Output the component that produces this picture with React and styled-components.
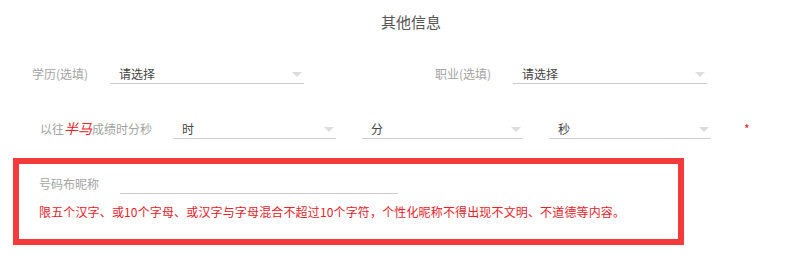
import React from 'react';
import styled, {createGlobalStyle} from "styled-components";

const GlobalStyle = createGlobalStyle`
  html, body {
    margin: 0;
    padding: 0;
    background: #fff;
  }
  body {
    font-family: "Noto Sans CJK SC", "Liberation Sans", sans-serif;
  }
`;

const Select = ({value, width}) => (
    <SelectBox $width={width}>
        <span>{value}</span>
        <Arrow/>
    </SelectBox>
);

const App = () => {
    return (
        <StyledComponent>
            <GlobalStyle/>
            <Title>其他信息</Title>

            <TopRow>
                <Field>
                    <Label>学历(选填)</Label>
                    <Select value={'请选择'} width={194}/>
                </Field>
                <Field>
                    <Label>职业(选填)</Label>
                    <Select value={'请选择'} width={194}/>
                </Field>
            </TopRow>

            <TimeRow>
                <TimeLabel>以往<em>半马</em>成绩时分秒</TimeLabel>
                <Select value={'时'} width={163}/>
                <Select value={'分'} width={161}/>
                <Select value={'秒'} width={162}/>
                <Star>*</Star>
            </TimeRow>

            <NickBox>
                <NickRow>
                    <NickLabel>号码布昵称</NickLabel>
                    <NickInput/>
                </NickRow>
                <Hint>限五个汉字、或10个字母、或汉字与字母混合不超过10个字符，个性化昵称不得出现不文明、不道德等内容。</Hint>
            </NickBox>
        </StyledComponent>
    );
};

const StyledComponent = styled.section`
  width: 800px;
  height: 268px;
  overflow: hidden;
  background: #fff;
`;

const Title = styled.h3`
  margin: 0;
  height: 44px;
  line-height: 44px;
  text-align: center;
  font-size: 15px;
  font-weight: normal;
  color: #555;
  padding-left: 22px;
`;

const TopRow = styled.div`
  display: grid;
  grid-template-columns: 403px 397px;
  margin-top: 20px;
`;

const Field = styled.div`
  display: flex;
  align-items: flex-end;
`;

const Label = styled.label`
  width: 110px;
  padding-right: 22px;
  box-sizing: border-box;
  text-align: right;
  font-size: 12px;
  line-height: 20px;
  color: #a3a3a3;
  white-space: nowrap;
`;

const SelectBox = styled.div`
  position: relative;
  width: ${p => p.$width}px;
  height: 20px;
  box-sizing: border-box;
  border-bottom: 1px solid #ccc;
  padding-left: 9px;
  font-size: 12px;
  line-height: 20px;
  color: #444;
`;

const Arrow = styled.i`
  position: absolute;
  right: 2px;
  top: 8px;
  width: 0;
  height: 0;
  border-left: 5px solid transparent;
  border-right: 5px solid transparent;
  border-top: 5px solid #ddd;
`;

const TimeRow = styled.div`
  display: flex;
  align-items: flex-end;
  gap: 26px;
  margin-top: 34px;
  padding-left: 40px;

  & > ${SelectBox}:first-of-type {
    margin-left: -5px;
  }
`;

const TimeLabel = styled.label`
  width: 112px;
  font-size: 12px;
  line-height: 20px;
  color: #a3a3a3;
  white-space: nowrap;

  em {
    color: #e62129;
    font-size: 14px;
    font-style: italic;
  }
`;

const Star = styled.span`
  align-self: center;
  margin-left: 7px;
  color: #e62129;
  font-size: 12px;
  line-height: 14px;
`;

const NickBox = styled.div`
  margin: 19px 0 0 13px;
  width: 671px;
  height: 87px;
  box-sizing: border-box;
  border: 6px solid #f43a3a;
  padding: 10px 20px 0;
`;

const NickRow = styled.div`
  display: flex;
  align-items: flex-end;
  gap: 21px;
`;

const NickLabel = styled.label`
  font-size: 12px;
  line-height: 20px;
  color: #a3a3a3;
`;

const NickInput = styled.div`
  width: 278px;
  height: 20px;
  border-bottom: 1px solid #ccc;
  box-sizing: border-box;
`;

const Hint = styled.p`
  margin: 10px 0 0;
  font-size: 12px;
  line-height: 16px;
  color: #e62129;
  letter-spacing: 0.15px;
  white-space: nowrap;
`;

export default App;
